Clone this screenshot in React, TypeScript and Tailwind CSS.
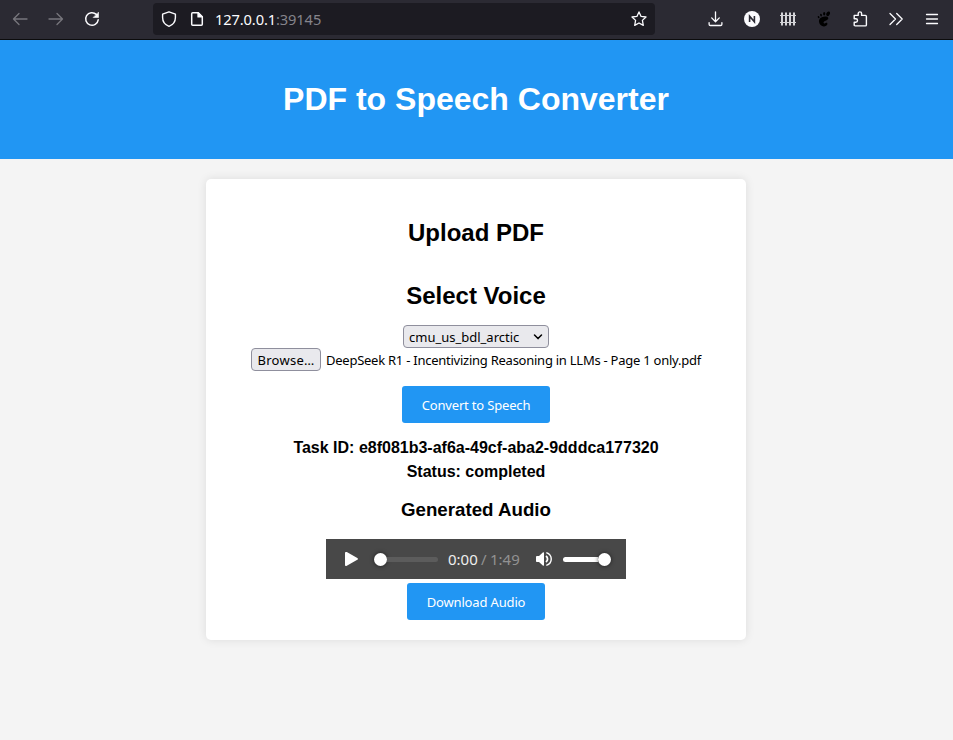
import type { ReactNode } from "react";

const ui = "font-['Noto_Sans',sans-serif]";
const control = "text-[13px] leading-[18px]";

function Icon({ children, className = "" }: { children: ReactNode; className?: string }) {
  return (
    <svg
      viewBox="0 0 16 16"
      className={`h-4 w-4 shrink-0 ${className}`}
      fill="none"
      stroke="currentColor"
      strokeWidth="1.3"
      strokeLinecap="round"
      strokeLinejoin="round"
    >
      {children}
    </svg>
  );
}

function Toolbar() {
  return (
    <div className="flex h-10 items-start border-b border-[#0c0c0d] bg-[#2b2a33] pt-[3px] text-[#fbfbfe]">
      <div className="flex h-8 w-[153px] items-center gap-5 pl-3">
        <Icon className="text-[#77767d]">
          <path d="M15 8H1.5M7 2.5 1.5 8 7 13.5" />
        </Icon>
        <Icon className="text-[#77767d]">
          <path d="M1 8h13.5M9 2.5 14.5 8 9 13.5" />
        </Icon>
        <Icon>
          <path d="M14.2 8.8A6.3 6.3 0 1 1 12.3 3.4" strokeWidth="1.5" />
          <path d="M14.5 1.5v5h-5z" fill="currentColor" strokeWidth="0.6" />
        </Icon>
      </div>
      <div className="flex h-8 w-[502px] items-center rounded bg-[#1c1b22] pl-2 pr-2">
        <Icon>
          <path d="M8 .8 14.4 3.2v3.2c0 4.2-2.3 7.3-6.4 8.9-4.1-1.6-6.4-4.7-6.4-8.9V3.2z" strokeWidth="1.4" />
        </Icon>
        <Icon className="ml-3">
          <path d="M3.7 1.7h5.6l4 4v7.6c0 .6-.4 1-1 1H3.7c-.6 0-1-.4-1-1V2.7c0-.6.4-1 1-1z" strokeWidth="1.5" />
          <path d="M9 1.7v4.2h4.3z" fill="currentColor" />
        </Icon>
        <span className={`${ui} ml-[10px] text-[14.67px] leading-5 tracking-[-0.12px]`}>
          127.0.0.1<span className="text-[#85848b]">:39145</span>
        </span>
        <Icon className="ml-auto">
          <path d="m8 .9 2.1 4.5 4.9.6-3.6 3.4.9 5L8 12l-4.3 2.4.9-5L1 6l4.9-.6z" />
        </Icon>
      </div>
      <div className="ml-[53px] flex h-8 items-center gap-5">
        <Icon>
          <path d="M7.5 .8v9.7M3.7 6.9l3.8 3.8 3.8-3.8M1.1 11.6v1.6c0 .8.5 1.3 1.3 1.3h10.2c.8 0 1.3-.5 1.3-1.3v-1.6" />
        </Icon>
        <Icon>
          <circle cx="8" cy="8" r="8" fill="#fbfbfe" stroke="none" />
          <path d="M5.6 11V5.2l4.8 5.6V5" stroke="#2b2a33" strokeWidth="1.6" strokeLinecap="butt" strokeLinejoin="miter" />
        </Icon>
        <Icon className="text-[#d4d4d8]">
          <path d="M2 1.5v13M6 1.5v13M10 1.5v13M14 1.5v13" strokeWidth="2" strokeLinecap="butt" />
          <path d="M0 4.5h16M0 11.5h16" strokeWidth="1.2" strokeLinecap="butt" />
        </Icon>
        <Icon className="text-black">
          <g fill="currentColor" stroke="none">
            <path d="M9 5.4C5.3 5.6 2.7 7.7 3 10.6c.2 3 2.8 5 5.2 4.8 2.2-.2 3.8-2 3.1-3.2-.7-1.1-2 .8-3.2.3-1.1-.6-.5-1.7.8-2.4 1.8-.9 3.6-1.5 3.4-3.1-.1-1.2-1.5-1.7-3.3-1.6z" />
            <ellipse cx="12.1" cy="2.8" rx="1.7" ry="2.4" transform="rotate(25 12.1 2.8)" />
            <ellipse cx="8.2" cy="2.8" rx="1.1" ry="1.8" />
            <ellipse cx="5" cy="4.1" rx=".9" ry="1.4" transform="rotate(-15 5 4.1)" />
            <ellipse cx="2.6" cy="6.2" rx=".8" ry="1.2" transform="rotate(-25 2.6 6.2)" />
          </g>
        </Icon>
        <Icon>
          <path d="M2.2 4.4h4V2.6a1.7 1.7 0 0 1 3.4 0v1.8h3.8c.6 0 1 .4 1 1v8.5c0 .6-.4 1-1 1H3.2c-.6 0-1-.4-1-1v-2.7h1.6a1.7 1.7 0 0 0 0-3.4H2.2z" strokeWidth="1.4" />
        </Icon>
        <Icon>
          <path d="M2 2.5 7.5 8 2 13.5M8.7 2.5 14.2 8l-5.5 5.5" />
        </Icon>
        <Icon>
          <path d="M2.5 3.5h11M2.5 8h11M2.5 12.5h11" />
        </Icon>
      </div>
    </div>
  );
}

function AudioPlayer() {
  return (
    <div className={`${ui} mt-[18px] flex h-10 w-[300px] shrink-0 items-center bg-[#484848] text-white`}>
      <svg viewBox="0 0 14 16" className="ml-[18px] h-4 w-[14px]">
        <path d="M1 2.2C1 1 1.8.6 2.8 1.1L13.3 7c.9.5.9 1.3 0 1.8L2.8 14.8C1.8 15.3 1 14.9 1 13.8z" fill="white" />
      </svg>
      <div className="ml-[16px] flex h-[13px] w-[64px] items-center">
        <div className="h-[13px] w-[13px] shrink-0 rounded-full bg-white shadow-[0_0_4px_rgba(0,0,0,0.6)]" />
        <div className="h-[5px] grow rounded-r-full bg-[#5c5c5c]" />
      </div>
      <span className="ml-[10px] w-[72px] whitespace-nowrap text-[15px] leading-5 text-[#eeeeee] [word-spacing:-0.6px]">
        0:00<span className="text-[#929292]"> / 1:49</span>
      </span>
      <svg viewBox="0 0 16 16" className="ml-[16px] h-4 w-4" fill="none" stroke="white">
        <path d="M0 6.2c0-.7.4-1.2 1.2-1.2H3l3.8-3.5C7.5.9 8 1.2 8 2v12c0 .8-.5 1.1-1.2.5L3 11H1.2C.4 11 0 10.6 0 9.9z" fill="white" stroke="none" />
        <path d="M9.9 5c2.2 1.2 2.2 4.8 0 6" strokeWidth="1.8" />
        <path d="M10.3 1.6c6.6 2.1 6.6 10.7 0 12.8" strokeWidth="1.4" />
      </svg>
      <div className="ml-[11px] flex h-[13px] w-[48px] items-center">
        <div className="h-[5px] grow rounded-l-full bg-white" />
        <div className="h-[13px] w-[13px] shrink-0 rounded-full bg-white shadow-[0_0_4px_rgba(0,0,0,0.6)]" />
      </div>
    </div>
  );
}

export default function App() {
  return (
    <div className="h-[740px] overflow-hidden bg-[#f4f4f4] font-['Liberation_Sans',Arial,sans-serif] text-black">
      <Toolbar />
      <header className="flex h-[119px] items-center justify-center bg-[#2196f3] pb-[2px] pr-px">
        <h1 className="text-[32px] font-bold leading-9 text-white">PDF to Speech Converter</h1>
      </header>
      <main className="ml-[206px] mt-5 flex h-[461px] w-[540px] flex-col items-center rounded-[5px] bg-white pt-10 shadow-[0_0_10px_rgba(0,0,0,0.1)]">
        <h2 className="text-2xl font-bold leading-7">Upload PDF</h2>
        <h2 className="mt-[35px] text-2xl font-bold leading-7">Select Voice</h2>
        <div className={`${ui} ${control} mt-[15px] flex h-[23px] w-[146px] items-center justify-between rounded-[4px] border border-[#8f8f9d] bg-[#e9e9ed] px-[5px]`}>
          <span>cmu_us_bdl_arctic</span>
          <svg viewBox="0 0 10 10" className="h-[10px] w-[10px]" fill="none" stroke="black" strokeWidth="1.5">
            <path d="m1.5 3 3.5 3.6L8.5 3" strokeLinecap="round" strokeLinejoin="round" />
          </svg>
        </div>
        <div className={`${ui} ${control} flex h-[23px] w-[450px] items-center whitespace-nowrap`}>
          <button className="h-[23px] w-[70px] shrink-0 rounded-[4px] border border-[#8f8f9d] bg-[#e9e9ed] tracking-[0.28px]">Browse…</button>
          <span className="ml-[5px] tracking-[-0.25px]">DeepSeek R1 - Incentivizing Reasoning in LLMs - Page 1 only.pdf</span>
        </div>
        <button className={`${ui} ${control} mt-[15px] h-[37px] w-[148px] rounded-[3px] bg-[#2196f3] tracking-[-0.17px] text-white`}>
          Convert to Speech
        </button>
        <p className="mt-4 text-base font-bold leading-[18px]">Task ID: e8f081b3-af6a-49cf-aba2-9dddca177320</p>
        <p className="mt-[6px] text-base font-bold leading-[18px]">Status: completed</p>
        <h3 className="mt-[18px] text-[18.72px] font-bold leading-[22px]">Generated Audio</h3>
        <AudioPlayer />
        <button className={`${ui} ${control} mt-1 h-[37px] w-[138px] rounded-[3px] bg-[#2196f3] tracking-[-0.15px] text-white`}>
          Download Audio
        </button>
      </main>
    </div>
  );
}
